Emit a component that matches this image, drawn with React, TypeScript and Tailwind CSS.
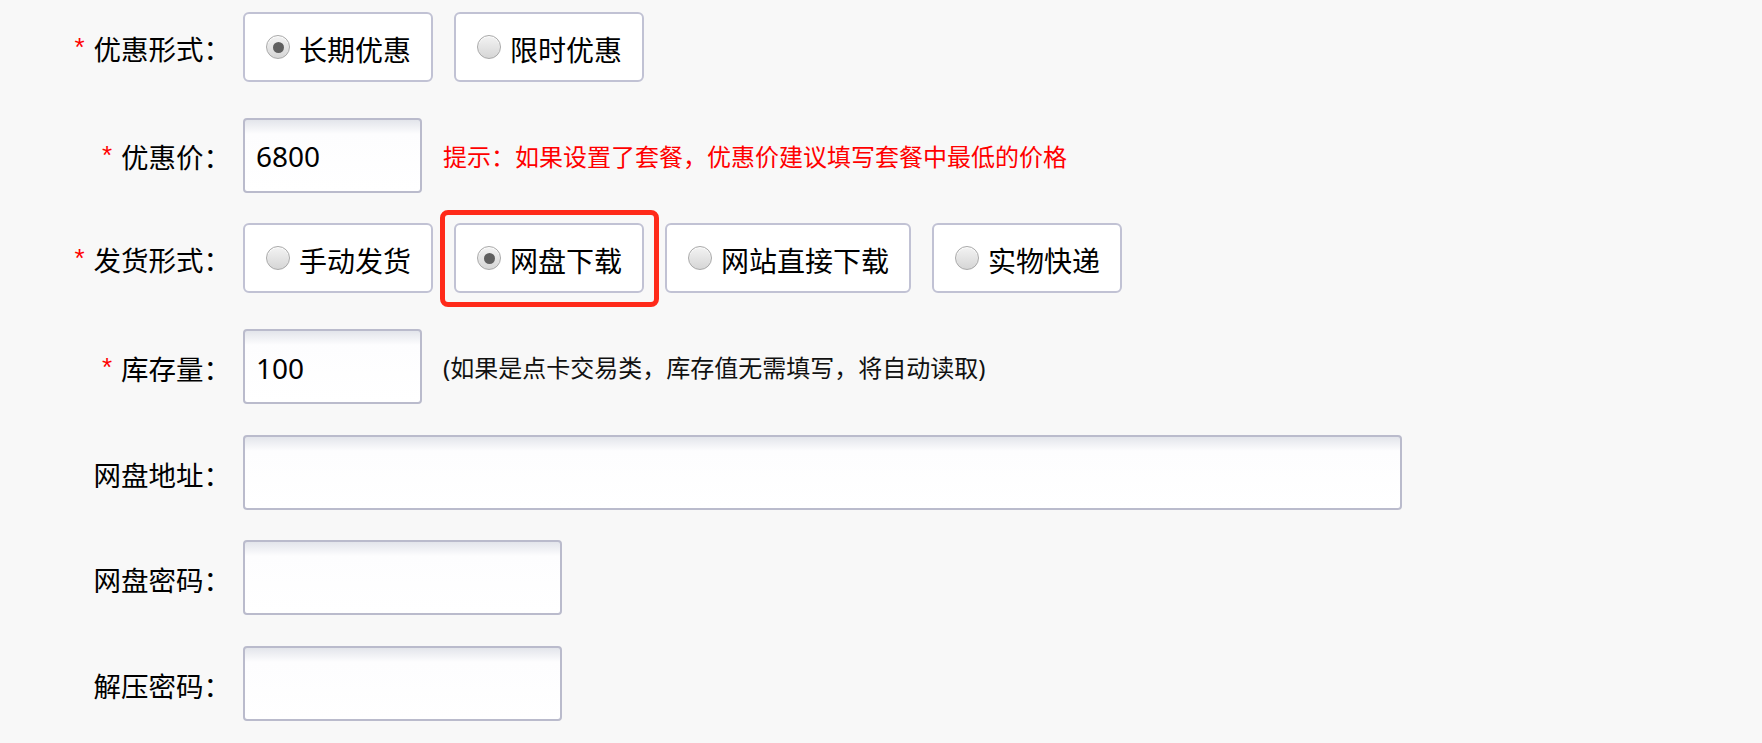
import React from "react";

const FONT = '"Noto Sans", "Noto Sans CJK SC", sans-serif';

function Radio({ checked }: { checked?: boolean }) {
  return (
    <span className="w-[24px] h-[24px] rounded-full border border-[#a9a9a9] bg-gradient-to-b from-[#f3f3f3] to-[#d6d6d6] shadow-[inset_0_1px_1px_rgba(255,255,255,0.9)] flex items-center justify-center shrink-0">
      {checked ? <span className="w-[11px] h-[11px] rounded-full bg-[#5f5f5f]" /> : null}
    </span>
  );
}

function RadioBtn({ label, checked, highlight }: { label: string; checked?: boolean; highlight?: boolean }) {
  return (
    <div className="relative h-[70px] pl-[21px] pr-[20px] rounded-[6px] border-2 border-[#c1c2d4] bg-white flex items-center gap-[9px]">
      <Radio checked={checked} />
      <span className="text-[28px] text-black leading-none pt-[5px]">{label}</span>
      {highlight ? (
        <div className="absolute -left-[16px] -top-[15px] -right-[17px] -bottom-[16px] border-[5px] border-[#ff2a1a] rounded-[8px]" />
      ) : null}
    </div>
  );
}

function Label({ text, required, tall }: { text: string; required?: boolean; tall?: boolean }) {
  return (
    <div className={(tall ? "h-[75px]" : "h-[70px]") + " w-[231px] flex items-center justify-end shrink-0"}>
      <span className="text-[27.5px] text-black leading-none pt-[6px] whitespace-nowrap">
        {required ? <span className="text-[#ff0000] text-[26px] relative -top-[4px] mr-[9px]" style={{ fontFamily: '"Liberation Sans", sans-serif' }}>*</span> : null}
        {text}
      </span>
    </div>
  );
}

function Input({ value, w }: { value?: string; w: "s" | "m" | "l" }) {
  const wc = w === "s" ? "w-[179px]" : w === "m" ? "w-[319px]" : "w-[1159px]";
  return (
    <div className={wc + " h-[75px] rounded-[4px] border-2 border-[#babbcc] bg-[linear-gradient(to_bottom,#e3e5eb_0px,#fdfdfe_14px,#ffffff_100%)] flex items-center pl-[11px] shrink-0"}>
      <span className="text-[28px] text-black leading-none pt-[2px]">{value}</span>
    </div>
  );
}

function Row({ children }: { children: React.ReactNode }) {
  return <div className="flex items-start h-[105.7px]">{children}</div>;
}

export default function App() {
  return (
    <div className="w-[1762px] h-[743px] bg-[#f8f8f8] overflow-hidden pt-[12px]" style={{ fontFamily: FONT }}>
      <Row>
        <Label text="优惠形式：" required />
        <div className="ml-[12px] flex items-center gap-[21px]">
          <RadioBtn label="长期优惠" checked />
          <RadioBtn label="限时优惠" />
        </div>
      </Row>
      <Row>
        <Label text="优惠价：" required tall />
        <div className="ml-[12px] flex items-center h-[75px]">
          <Input value="6800" w="s" />
          <span className="ml-[21px] text-[24px] text-[#ff0000] leading-none pt-[3px] whitespace-nowrap">提示：如果设置了套餐，优惠价建议填写套餐中最低的价格</span>
        </div>
      </Row>
      <Row>
        <Label text="发货形式：" required />
        <div className="ml-[12px] flex items-center gap-[21px]">
          <RadioBtn label="手动发货" />
          <RadioBtn label="网盘下载" checked highlight />
          <RadioBtn label="网站直接下载" />
          <RadioBtn label="实物快递" />
        </div>
      </Row>
      <Row>
        <Label text="库存量：" required tall />
        <div className="ml-[12px] flex items-center h-[75px]">
          <Input value="100" w="s" />
          <span className="ml-[21px] text-[24px] text-[#111] leading-none pt-[3px] whitespace-nowrap">(如果是点卡交易类，库存值无需填写，将自动读取)</span>
        </div>
      </Row>
      <Row>
        <Label text="网盘地址：" tall />
        <div className="ml-[12px]">
          <Input w="l" />
        </div>
      </Row>
      <Row>
        <Label text="网盘密码：" tall />
        <div className="ml-[12px]">
          <Input w="m" />
        </div>
      </Row>
      <Row>
        <Label text="解压密码：" tall />
        <div className="ml-[12px]">
          <Input w="m" />
        </div>
      </Row>
    </div>
  );
}
